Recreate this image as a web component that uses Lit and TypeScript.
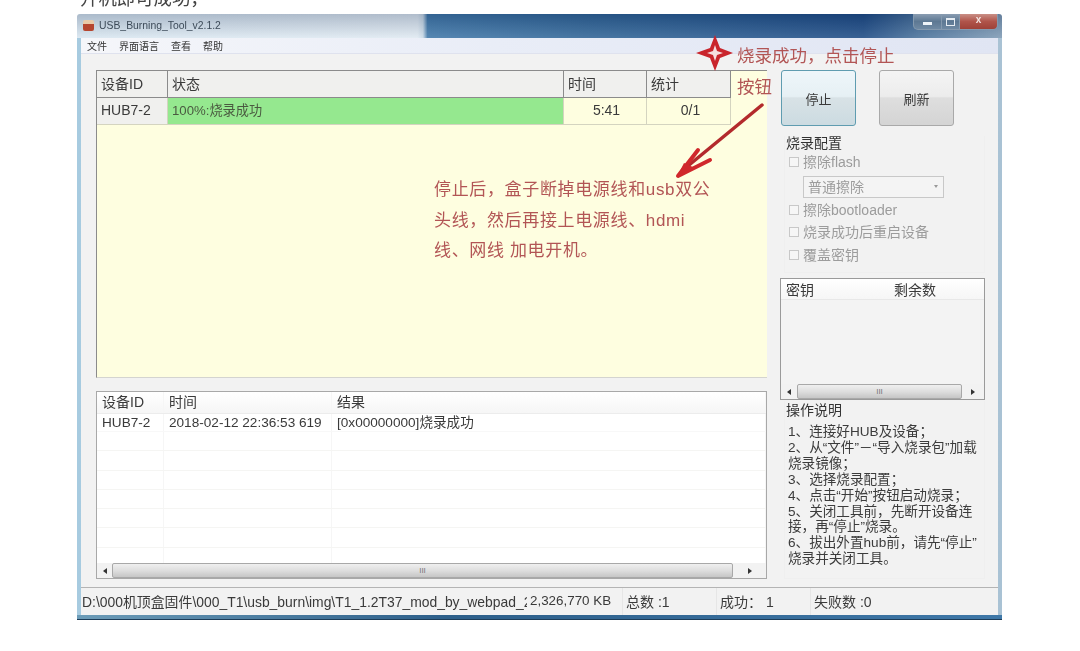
import { LitElement, html, css, svg } from "lit";
import { customElement } from "lit/decorators.js";

const FONT = css`"Liberation Sans", "Noto Sans CJK SC", sans-serif`;

@customElement("app-root")
export class AppRoot extends LitElement {
  static styles = css`
    :host { display: block; position: relative; width: 1080px; height: 651px; overflow: hidden; background: #fff; font-family: ${FONT}; color: #3a3a3a; }
    * { box-sizing: border-box; }
    .cliptext { height: 14px; overflow: hidden; padding-left: 80px; display: flex; align-items: flex-end; font-size: 18.4px; line-height: 22px; color: #444; }
    .cliptext span { display: block; margin-bottom: 4px; filter: blur(0.3px); }
    .window { margin-left: 77px; width: 925px; height: 606px; display: flex; flex-direction: column; padding: 0 4px 4px; border-radius: 3px 3px 0 0; filter: blur(0.35px); position: relative;
      background:
        linear-gradient(rgba(10, 30, 70, 0.22), rgba(255, 255, 255, 0.12)) top / 100% 24px no-repeat,
        linear-gradient(90deg, #d8e6f0 0, #dfe9f1 36.8%, #c8d9e6 37.4%, #3f77a8 37.9%, #2f6496 55%, #1c4a84 85%, #47709a 91%, #7e9ab4 100%) top / 100% 24px no-repeat,
        linear-gradient(90deg, #a7cbe0 0, #bcd3e2 50%, #a9c2d4 100%); }
    .window::after { content: ""; position: absolute; left: 0; right: 0; bottom: 0; height: 4px; background: linear-gradient(90deg, #6c9cb8, #2d5f8a 40%, #3f78a8 100%); border-bottom: 1px solid #1d3c58; }
    .title { height: 24px; display: flex; align-items: center; gap: 5px; padding-left: 2px; font-size: 10.4px; color: #3c4a58; flex: none; }
    .title > span { margin-bottom: 2px; }
    .appicon { width: 11px; height: 11px; margin-bottom: 1px; border-radius: 2px; background: linear-gradient(#e9c9a8 0 40%, #b5452f 40%); flex: none; }
    .controls { margin-left: auto; display: flex; height: 16px; align-self: flex-start; }
    .ctl { height: 16px; display: flex; align-items: center; justify-content: center; border: 1px solid #8499ae; border-top: none; background: linear-gradient(#8a9db2, #5d7893 50%, #6f89a3); }
    .ctl.min { width: 29px; border-radius: 0 0 0 5px; }
    .ctl.max { width: 18px; border-left: none; }
    .ctl.close { width: 38px; border-left: none; border-radius: 0 0 5px 0; background: linear-gradient(#c98f86, #b0544a 50%, #9e4138); color: #f3e6e3; font-size: 10px; font-weight: bold; line-height: 1; padding-bottom: 3px; }
    .glyph-min { width: 9px; height: 3px; margin-top: 3px; background: #eef3f8; }
    .glyph-max { width: 9px; height: 8px; border: 1px solid #e6ecf2; border-top-width: 2px; }
    .client { flex: 1; display: flex; flex-direction: column; background: #f2f2f2; min-height: 0; }
    .menu { height: 16px; flex: none; display: flex; align-items: center; gap: 12px; padding-left: 6px; font-size: 10px; color: #333; background: linear-gradient(90deg, #f5f6fa, #e9edf7 45%, #e0e5f3); border-bottom: 1px solid #dfe2ee; }
    .body { flex: 1; min-height: 0; display: flex; gap: 13px; padding: 16px 0 8px 15px; }
    .left { width: 671px; display: flex; flex-direction: column; gap: 13px; flex: none; }
    .grid { height: 308px; flex: none; background: #fefee0; border-top: 1.5px solid #8b8b8b; border-left: 1.5px solid #8b8b8b; border-bottom: 1px solid #d4d4d0; }
    .grow { display: grid; grid-template-columns: 71px 396px 83px 84px; width: 634px; }
    .grow.head { height: 27px; font-size: 14px; background: #f0f0ee; border-bottom: 1.5px solid #8b8b8b; border-right: 1.5px solid #8b8b8b; }
    .grow.head > div { padding: 0 0 2px 4px; display: flex; align-items: center; border-right: 1.5px solid #8b8b8b; }
    .grow.head > div:last-child { border-right: none; }
    .grow.row { height: 27px; font-size: 14px; border-bottom: 1px solid #d4d4c0; border-right: 1px solid #d4d4c0; }
    .grow.row > div { display: flex; align-items: center; border-right: 1px solid #d4d4c0; }
    .grow.row > div:last-child { border-right: none; }
    .cid { background: #f0f0ee; padding: 0 0 2px 4px; }
    .cstat { background: #95e88f; padding: 0 0 3px 4px; color: #4a5a40; font-size: 13.2px; }
    .cnum { justify-content: center; padding: 0 0 2px 3px; }
    .log { height: 188px; flex: none; background: #fff; border: 1px solid #a8a8a8; display: flex; flex-direction: column; font-size: 14px; }
    .lrow { display: grid; grid-template-columns: 67px 168px 1fr; flex: none; }
    .lrow > div { padding-left: 5px; display: flex; align-items: center; border-right: 1px solid #f6f6f6; }
    .lhead { height: 22px; background: linear-gradient(#fff, #f6f6f6); border-bottom: 1px solid #ececec; }
    .lhead > div { padding-bottom: 2px; line-height: 16px; }
    .ldata { height: 18px; border-bottom: 1px solid #f8f8f8; font-size: 13.6px; }
    .ldata > div { padding-bottom: 0; line-height: 14px; }
    .lempty { height: 19.3px; border-bottom: 1px solid #f5f5f3; }
    .lfill { flex: 1; min-height: 0; overflow: hidden; }
    .sb { height: 15px; flex: none; display: flex; align-items: center; background: #f2f2f2; position: relative; }
    .arrow { flex: none; display: flex; align-items: center; justify-content: center; }
    .thumb { flex: 1; height: 100%; background: linear-gradient(#efefef, #dedede 50%, #c6c6c6); border: 1px solid #a8a8a8; border-radius: 2px; display: flex; align-items: center; justify-content: center; font-size: 8px; color: #777; line-height: 1; }
    .tri-l { width: 0; height: 0; border: 3px solid transparent; border-right: 4px solid #333; border-left: none; }
    .tri-r { width: 0; height: 0; border: 3px solid transparent; border-left: 4px solid #333; border-right: none; }
    .right { width: 205px; flex: none; display: flex; flex-direction: column; }
    .buttons { height: 56px; display: flex; gap: 23px; padding-left: 1px; flex: none; }
    .btn { width: 75px; height: 56px; display: flex; align-items: center; justify-content: center; font-size: 13px; border-radius: 3px; border: 1px solid #a9a9a9; background: linear-gradient(#f4f4f4, #ececec 47%, #dedede 50%, #d4d4d4); }
    .btn.on { border: 1.5px solid #5f9cb0; background: linear-gradient(#eef6fa, #e6f0f4 47%, #d8e2e6 50%, #ccdbe1); }
    .config { margin: 10px 0 0 4px; width: 201px; height: 137px; flex: none; border: 1px solid #efefef; border-top: none; position: relative; display: flex; flex-direction: column; }
    .gtitle { font-size: 14px; line-height: 14px; color: #333; height: 15px; margin-left: 1px; }
    .chk { display: flex; align-items: center; gap: 4px; font-size: 14px; color: #9c9c9c; padding: 0 0 2px 4px; height: 22.5px; flex: none; }
    .box { width: 10px; height: 10px; margin-top: 2px; border: 1px solid #c8c8c8; background: #f6f6f6; flex: none; }
    .combo { margin: 2px 0 0 18px; width: 141px; height: 22px; flex: none; display: flex; align-items: center; justify-content: space-between; padding: 0 5px 2px 4px; border: 1px solid #c8c8c8; background: #f4f4f4; font-size: 14px; color: #9c9c9c; }
    .caret { width: 0; height: 0; margin-top: 2px; border: 2.5px solid transparent; border-top: 3px solid #999; border-bottom: none; }
    .keys { margin-top: 5px; height: 122px; flex: none; border: 1px solid #9a9a9a; background: #f3f3f3; display: flex; flex-direction: column; }
    .khead { height: 21px; flex: none; display: grid; grid-template-columns: 108px 1fr; padding: 0 0 1px 5px; font-size: 14px; align-items: center; background: linear-gradient(#fff, #f6f6f6); border-bottom: 1px solid #e8e8e8; }
    .kfill { flex: 1; }
    .ops { margin: 1px 0 0 4px; width: 201px; flex: 1; min-height: 0; border: 1px solid #efefef; border-top: none; }
    .ops .gtitle { height: 23px; line-height: 18px; }
    .opstext { font-size: 13.6px; line-height: 15.9px; color: #3c3c3c; padding: 0 0 0 3px; white-space: nowrap; }
    .status { height: 29px; flex: none; display: grid; grid-template-columns: 446px 95px 94px 94px 1fr; border-top: 1px solid #b4b4b4; font-size: 14px; align-items: center; background: #f2f2f2; }
    .status > div { height: 100%; display: flex; align-items: center; overflow: hidden; white-space: nowrap; padding: 0 0 3px 3px; border-left: 1px solid #e6e6e6; }
    .status > div:first-child { padding-left: 1px; border-left: none; font-size: 13.9px; }
    .status .sz { padding-left: 3px; border-left: none; font-size: 13.4px; }
    .ink { position: absolute; left: 0; top: 0; width: 1080px; height: 651px; pointer-events: none; }
    .note { position: absolute; color: #b25555; line-height: 22px; white-space: nowrap; filter: blur(0.35px); }
    .n1 { left: 737px; top: 45px; font-size: 17.5px; }
    .n2 { left: 737px; top: 76px; font-size: 17.5px; }
    .n3 { left: 434px; top: 179px; font-size: 17px; letter-spacing: 0.65px; }
    .n4 { left: 434px; top: 210px; font-size: 17px; letter-spacing: 0.65px; }
    .n5 { left: 434px; top: 240px; font-size: 17px; letter-spacing: 0.65px; }
  `;

  private scrollbar(arrow: number, rightEnd: number) {
    return html`<div class="sb">
      <div class="arrow" style="width:${arrow}px"><div class="tri-l"></div></div>
      <div class="thumb">III</div>
      <div class="arrow" style="width:${rightEnd}px"><div class="tri-r"></div></div>
    </div>`;
  }

  render() {
    const emptyRows = [0, 1, 2, 3, 4, 5, 6];
    return html`
      <div class="cliptext"><span>开机即可成功，</span></div>
      <div class="window">
        <div class="title">
          <div class="appicon"></div>
          <span>USB_Burning_Tool_v2.1.2</span>
          <div class="controls">
            <div class="ctl min"><div class="glyph-min"></div></div>
            <div class="ctl max"><div class="glyph-max"></div></div>
            <div class="ctl close">x</div>
          </div>
        </div>
        <div class="client">
          <div class="menu"><span>文件</span><span>界面语言</span><span>查看</span><span>帮助</span></div>
          <div class="body">
            <div class="left">
              <div class="grid">
                <div class="grow head"><div>设备ID</div><div>状态</div><div>时间</div><div>统计</div></div>
                <div class="grow row">
                  <div class="cid">HUB7-2</div>
                  <div class="cstat">100%:烧录成功</div>
                  <div class="cnum">5:41</div>
                  <div class="cnum">0/1</div>
                </div>
              </div>
              <div class="log">
                <div class="lrow lhead"><div>设备ID</div><div>时间</div><div>结果</div></div>
                <div class="lrow ldata"><div>HUB7-2</div><div>2018-02-12 22:36:53 619</div><div>[0x00000000]烧录成功</div></div>
                <div class="lfill">
                  ${emptyRows.map(() => html`<div class="lrow lempty"><div></div><div></div><div></div></div>`)}
                </div>
                ${this.scrollbar(15, 33)}
              </div>
            </div>
            <div class="right">
              <div class="buttons">
                <div class="btn on">停止</div>
                <div class="btn">刷新</div>
              </div>
              <div class="config">
                <div class="gtitle">烧录配置</div>
                <div class="chk"><div class="box"></div>擦除flash</div>
                <div class="combo"><span>普通擦除</span><div class="caret"></div></div>
                <div class="chk" style="margin-top:1px"><div class="box"></div>擦除bootloader</div>
                <div class="chk"><div class="box"></div>烧录成功后重启设备</div>
                <div class="chk"><div class="box"></div>覆盖密钥</div>
              </div>
              <div class="keys">
                <div class="khead"><span>密钥</span><span>剩余数</span></div>
                <div class="kfill"></div>
                ${this.scrollbar(16, 22)}
              </div>
              <div class="ops">
                <div class="gtitle">操作说明</div>
                <div class="opstext">
                  1、连接好HUB及设备；<br />
                  2、从“文件”－“导入烧录包”加载<br />
                  烧录镜像；<br />
                  3、选择烧录配置；<br />
                  4、点击“开始”按钮启动烧录；<br />
                  5、关闭工具前，先断开设备连<br />
                  接，再“停止”烧录。<br />
                  6、拔出外置hub前，请先“停止”<br />
                  烧录并关闭工具。
                </div>
              </div>
            </div>
          </div>
          <div class="status">
            <div>D:\\000机顶盒固件\\000_T1\\usb_burn\\img\\T1_1.2T37_mod_by_webpad_2</div>
            <div class="sz">2,326,770 KB</div>
            <div>总数 :1</div>
            <div>成功： 1</div>
            <div>失败数 :0</div>
          </div>
        </div>
      </div>
      <svg class="ink" viewBox="0 0 1080 651">
        ${svg`
          <path d="M715 35 L720 48 L733 53 L720 58 L715 71 L710 58 L696 53 L710 48 Z" fill="#c9252c"/>
          <path d="M715 45 L717 51 L723 53 L717 55 L715 61 L713 55 L707 53 L713 51 Z" fill="#f6dfe0"/>
          <path d="M762 105 L683 170" stroke="#b32a2c" stroke-width="3.5" stroke-linecap="round" fill="none"/>
          <path d="M698 150 L678 176 L710 160" stroke="#d0282c" stroke-width="4" stroke-linecap="round" stroke-linejoin="round" fill="none"/>
          <path d="M684 163 L677 177 L695 168 Z" fill="#d0282c"/>
        `}
      </svg>
      <div class="note n1">烧录成功，点击停止</div>
      <div class="note n2">按钮</div>
      <div class="note n3">停止后，盒子断掉电源线和usb双公</div>
      <div class="note n4">头线，然后再接上电源线、hdmi</div>
      <div class="note n5">线、网线 加电开机。</div>
    `;
  }
}
